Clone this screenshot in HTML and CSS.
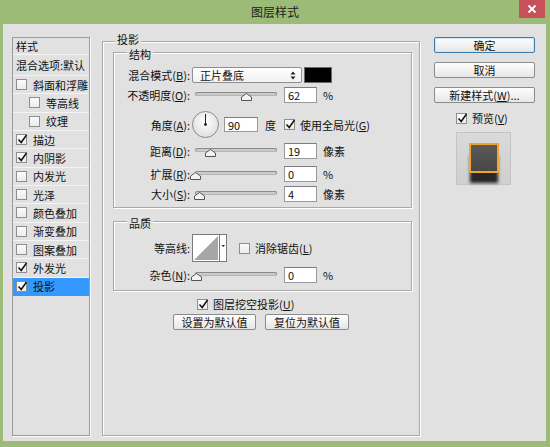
FILE: index.html
```html
<!DOCTYPE html>
<html lang="zh-CN">
<head>
<meta charset="utf-8">
<title>图层样式</title>
<link rel="stylesheet" href="styles.css">
</head>
<body>
<div class="titlebar">
  <span></span>
  <span class="title">图层样式</span>
  <span class="close"><svg width="10" height="10" viewBox="0 0 10 10"><path d="M1.5 1.5 L8.5 8.5 M8.5 1.5 L1.5 8.5" stroke="#fff" stroke-width="1.8"/></svg></span>
</div>
<div class="dialog">
  <div class="sidebar">
    <div class="srow head">样式</div>
    <div class="srow blend">混合选项:默认</div>
    <div class="srow"><i class="cb"></i>斜面和浮雕</div>
    <div class="srow sub"><i class="cb"></i>等高线</div>
    <div class="srow sub"><i class="cb"></i>纹理</div>
    <div class="srow"><i class="cb on"><svg viewBox="0 0 11 11"><path d="M1.5 5.5 L4.2 8.5 L9.5 1" /></svg></i>描边</div>
    <div class="srow"><i class="cb on"><svg viewBox="0 0 11 11"><path d="M1.5 5.5 L4.2 8.5 L9.5 1" /></svg></i>内阴影</div>
    <div class="srow"><i class="cb"></i>内发光</div>
    <div class="srow"><i class="cb"></i>光泽</div>
    <div class="srow"><i class="cb"></i>颜色叠加</div>
    <div class="srow"><i class="cb"></i>渐变叠加</div>
    <div class="srow"><i class="cb"></i>图案叠加</div>
    <div class="srow"><i class="cb on"><svg viewBox="0 0 11 11"><path d="M1.5 5.5 L4.2 8.5 L9.5 1" /></svg></i>外发光</div>
    <div class="srow sel"><i class="cb on"><svg viewBox="0 0 11 11"><path d="M1.5 5.5 L4.2 8.5 L9.5 1" /></svg></i>投影</div>
  </div>

  <div class="main">
    <div class="gtitle outer-title">投影</div>

    <div class="group struct">
      <div class="gtitle">结构</div>
      <div class="frow r1">
        <span class="lbl">混合模式(<u>B</u>):</span>
        <div class="select"><span>正片叠底</span><svg width="6" height="9" viewBox="0 0 6 9"><path d="M3 0.5 L5.5 3.5 H0.5 Z M3 8.5 L5.5 5.5 H0.5 Z" fill="#222"/></svg></div>
        <div class="swatch"></div>
      </div>
      <div class="frow r2">
        <span class="lbl">不透明度(<u>O</u>):</span>
        <div class="slider"><div class="track"></div><svg class="thumb" style="left:46px" width="11" height="8" viewBox="0 0 11 8"><path d="M0.5 7.5 V4 L5.5 0.5 L10.5 4 V7.5 Z" fill="#f3f3f3" stroke="#555"/></svg></div>
        <input class="num" value="62">
        <span class="unit">%</span>
      </div>
      <div class="frow r3">
        <span class="lbl">角度(<u>A</u>):</span>
        <svg class="dial" width="27" height="27" viewBox="0 0 27 27">
          <defs><radialGradient id="dg" cx="50%" cy="40%" r="60%"><stop offset="0" stop-color="#ffffff"/><stop offset="1" stop-color="#dedede"/></radialGradient></defs>
          <circle cx="13.5" cy="13.5" r="13" fill="url(#dg)" stroke="#8a8a8a"/>
          <line x1="13.5" y1="13.5" x2="13.5" y2="3" stroke="#222" stroke-width="1"/>
          <circle cx="13.5" cy="13.5" r="1.4" fill="#222"/>
        </svg>
        <input class="num ang" value="90">
        <span class="unit deg">度</span>
        <i class="cb on glob"><svg viewBox="0 0 11 11"><path d="M1.5 5.5 L4.2 8.5 L9.5 1" /></svg></i>
        <span class="cbtext">使用全局光(<u>G</u>)</span>
      </div>
      <div class="frow r4">
        <span class="lbl">距离(<u>D</u>):</span>
        <div class="slider"><div class="track"></div><svg class="thumb" style="left:10px" width="11" height="8" viewBox="0 0 11 8"><path d="M0.5 7.5 V4 L5.5 0.5 L10.5 4 V7.5 Z" fill="#f3f3f3" stroke="#555"/></svg></div>
        <input class="num" value="19">
        <span class="unit">像素</span>
      </div>
      <div class="frow r5">
        <span class="lbl">扩展(<u>R</u>):</span>
        <div class="slider"><div class="track"></div><svg class="thumb" style="left:-5px" width="11" height="8" viewBox="0 0 11 8"><path d="M0.5 7.5 V4 L5.5 0.5 L10.5 4 V7.5 Z" fill="#f3f3f3" stroke="#555"/></svg></div>
        <input class="num" value="0">
        <span class="unit">%</span>
      </div>
      <div class="frow r6">
        <span class="lbl">大小(<u>S</u>):</span>
        <div class="slider"><div class="track"></div><svg class="thumb" style="left:-1px" width="11" height="8" viewBox="0 0 11 8"><path d="M0.5 7.5 V4 L5.5 0.5 L10.5 4 V7.5 Z" fill="#f3f3f3" stroke="#555"/></svg></div>
        <input class="num" value="4">
        <span class="unit">像素</span>
      </div>
    </div>

    <div class="group quality">
      <div class="gtitle">品质</div>
      <div class="frow q1">
        <span class="lbl">等高线:</span>
        <svg class="contour" width="35" height="28" viewBox="0 0 35 28">
          <rect x="0.5" y="0.5" width="34" height="27" fill="#fff" stroke="#7a7a7a"/>
          <polygon points="2,26 26,2 26,26" fill="#a6a6a6"/>
          <line x1="27.5" y1="0.5" x2="27.5" y2="27.5" stroke="#7a7a7a"/>
          <path d="M29.5 11 H33 L31.25 13 Z" fill="#222"/>
        </svg>
        <i class="cb aa"></i>
        <span class="cbtext">消除锯齿(<u>L</u>)</span>
      </div>
      <div class="frow q2">
        <span class="lbl">杂色(<u>N</u>):</span>
        <div class="slider"><div class="track"></div><svg class="thumb" style="left:-4px" width="11" height="8" viewBox="0 0 11 8"><path d="M0.5 7.5 V4 L5.5 0.5 L10.5 4 V7.5 Z" fill="#f3f3f3" stroke="#555"/></svg></div>
        <input class="num" value="0">
        <span class="unit">%</span>
      </div>
    </div>

    <div class="knock">
      <i class="cb on"><svg viewBox="0 0 11 11"><path d="M1.5 5.5 L4.2 8.5 L9.5 1" /></svg></i>
      <span class="cbtext">图层挖空投影(<u>U</u>)</span>
    </div>
    <div class="defaults">
      <div class="btn wide1">设置为默认值</div>
      <div class="btn wide2">复位为默认值</div>
    </div>
  </div>

  <div class="right">
    <div class="btn default">确定</div>
    <div class="btn">取消</div>
    <div class="btn">新建样式(<u>W</u>)...</div>
    <div class="preview-row">
      <i class="cb on"><svg viewBox="0 0 11 11"><path d="M1.5 5.5 L4.2 8.5 L9.5 1" /></svg></i>
      <span class="cbtext">预览(<u>V</u>)</span>
    </div>
    <div class="preview"><div class="swatch-preview"></div></div>
  </div>
</div>
</body>
</html>
```

FILE: styles.css
```css
* { box-sizing: border-box; }
html, body { margin: 0; padding: 0; }
body {
  width: 550px;
  height: 447px;
  overflow: hidden;
  background: #9cbb76;
  font-family: "Noto Sans CJK SC", "Noto Sans", sans-serif;
  font-size: 11px;
  line-height: 14px;
  color: #111;
}
u { text-decoration: underline; text-underline-offset: 1px; }

.titlebar {
  height: 24px;
  display: grid;
  grid-template-columns: 1fr auto 1fr;
  align-items: center;
}
.title { font-size: 12px; color: #1b1b1b; }
.close {
  justify-self: end;
  align-self: start;
  width: 26px;
  height: 18px;
  margin-right: 5px;
  background: #c8505b;
  display: flex;
  align-items: center;
  justify-content: center;
}

.dialog {
  margin: 0 4px 0 3px;
  height: 417px;
  background: #e1e1e1;
  display: flex;
  align-items: flex-start;
  padding: 13px 0 0 9px;
}

/* sidebar */
.sidebar {
  flex: none;
  width: 78px;
  height: 399px;
  border: 1px solid #9c9c9c;
  box-shadow: 1px 1px 0 #fafafa;
}
.srow {
  height: 18.33px;
  border-bottom: 1px solid #f4f4f4;
  display: flex;
  align-items: center;
  padding-left: 3px;
  white-space: nowrap;
}
.srow.head { height: 17px; }
.srow.blend { height: 21px; }
.srow.sub { padding-left: 16px; }
.srow.sel { background: #3399ff; border-bottom-color: #3399ff; }

.cb {
  flex: none;
  width: 11px;
  height: 11px;
  border: 1px solid #8e8e8e;
  background: linear-gradient(#fbfbfb, #ececec);
  margin-right: 6px;
  display: inline-flex;
}
.cb svg {
  width: 11px;
  height: 11px;
  margin: -1px 0 0 0;
  overflow: visible;
  fill: none;
  stroke: #111;
  stroke-width: 1.5;
}

/* main group */
.main {
  flex: none;
  width: 318px;
  height: 395px;
  margin: 4px 0 0 12px;
  border: 1px solid #a9a9a9;
  box-shadow: inset 1px 1px 0 #fff, 1px 1px 0 #fff;
}
.gtitle {
  width: fit-content;
  height: 16px;
  line-height: 16px;
  margin: -7px 0 0 13px;
  padding: 0 2px;
  background: #e1e1e1;
}
.outer-title {
  height: 12px;
  line-height: 12px;
  margin: -9px 0 0 12px;
}

.group {
  margin: 7px 7px 0 10px;
  border: 1px solid #a9a9a9;
  box-shadow: inset 1px 1px 0 #fff, 1px 1px 0 #fff;
}
.struct { padding-bottom: 5px; }
.quality { margin-top: 13px; padding-bottom: 7px; }

.frow {
  display: flex;
  align-items: center;
  height: 16px;
}
.lbl {
  flex: none;
  width: 76px;
  text-align: right;
  white-space: nowrap;
}
.r1 { margin-top: 5px; }
.r2 { margin-top: 4px; }
.r3 { margin-top: 8px; height: 27px; }
.r4 { margin-top: 5px; }
.r5 { margin-top: 7px; }
.r6 { margin-top: 4px; }
.q1 { margin-top: 3px; height: 28px; }
.q2 { margin-top: 5px; }

.select {
  flex: none;
  width: 110px;
  height: 16px;
  margin-left: 2px;
  border: 1px solid #8f8f8f;
  border-radius: 2px;
  background: linear-gradient(#ffffff, #f1f1f1);
  display: flex;
  align-items: center;
  justify-content: space-between;
  padding: 0 5px 0 7px;
}
.swatch {
  flex: none;
  width: 28px;
  height: 16px;
  margin-left: 2px;
  background: #000;
  border: 1px solid #6a6a6a;
}

.slider {
  flex: none;
  position: relative;
  width: 82px;
  height: 14px;
  margin-left: 5px;
}
.track {
  margin-top: 4px;
  height: 4px;
  border: 1px solid #8a8a8a;
  border-bottom-color: #b4b4b4;
  border-radius: 2px;
  background: #cbcbcb;
}
.thumb { position: absolute; top: 5px; }

.num {
  flex: none;
  width: 33px;
  height: 16px;
  margin: 0 0 0 7px;
  padding: 0 3px;
  border: 1px solid #9a9a9a;
  border-top-color: #7d7d7d;
  background: #fff;
  font: inherit;
  color: #111;
  outline: none;
}
.unit { margin-left: 6px; white-space: nowrap; }

.dial { flex: none; margin-left: 2px; }
.num.ang { width: 34px; height: 15px; margin-left: 5px; }
.unit.deg { margin-left: 7px; }
.cb.glob { margin-left: 8px; margin-right: 5px; }
.cbtext { white-space: nowrap; }

.contour { flex: none; margin-left: 2px; }
.cb.aa { margin-left: 12px; margin-right: 5px; }

.knock {
  display: flex;
  align-items: center;
  height: 14px;
  margin-top: 6px;
  padding-left: 94px;
}
.knock .cb { margin-right: 5px; }

.defaults {
  display: flex;
  justify-content: center;
  gap: 9px;
  margin-top: 3px;
}
.btn {
  height: 16px;
  border: 1px solid #8c8c8c;
  border-radius: 2px;
  background: linear-gradient(#fefefe, #e6e6e6);
  display: flex;
  align-items: center;
  justify-content: center;
  white-space: nowrap;
}
.wide1 { width: 83px; }
.wide2 { width: 84px; }

/* right column */
.right {
  flex: none;
  width: 101px;
  margin-left: 14px;
}
.right .btn { margin-bottom: 9px; }
.right .btn.default {
  border-color: #3a7cb0;
  box-shadow: inset 0 0 0 1px #cfe6f7;
}
.preview-row {
  display: flex;
  align-items: center;
  height: 12px;
  padding-left: 22px;
}
.preview-row .cb { margin-right: 5px; }
.preview {
  width: 55px;
  height: 53px;
  margin: 8px 0 0 22px;
  border: 1px solid #c4c4c4;
  background: linear-gradient(#dadada, #cfcfcf);
  padding: 10px 0 0 12px;
}
.swatch-preview {
  width: 30px;
  height: 30px;
  border: 2px solid #f0a52c;
  background: linear-gradient(#5a5a5a, #474747);
  box-shadow: 0 11px 3px -1px rgba(20, 20, 20, 0.9);
}
```
